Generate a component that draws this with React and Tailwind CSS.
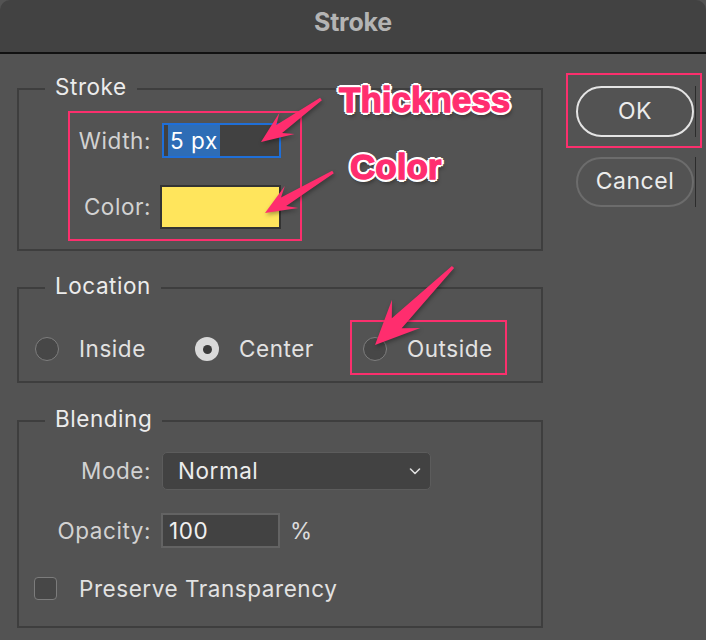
import React from "react";

function arrowPts(tx, ty, px, py, h, w, sw) {
  const dx = px - tx, dy = py - ty;
  const L = Math.hypot(dx, dy);
  const ux = dx / L, uy = dy / L;
  const nx = -uy, ny = ux;
  const bx = px - ux * h, by = py - uy * h;
  const sx = px - ux * h * 0.7, sy = py - uy * h * 0.7;
  const pts = [
    [tx + nx * 1.5, ty + ny * 1.5],
    [sx + nx * sw, sy + ny * sw],
    [bx + nx * w, by + ny * w],
    [px, py],
    [bx - nx * w, by - ny * w],
    [sx - nx * sw, sy - ny * sw],
    [tx - nx * 1.5, ty - ny * 1.5],
  ];
  return pts.map((p) => p[0].toFixed(1) + "," + p[1].toFixed(1)).join(" ");
}

function Radio({ checked }) {
  if (checked) {
    return (
      <div className="w-[24px] h-[24px] rounded-full bg-[#d9d9d9] flex items-center justify-center shrink-0">
        <div className="w-[9px] h-[9px] rounded-full bg-[#3a3a3a]" />
      </div>
    );
  }
  return <div className="w-[24px] h-[24px] rounded-full border-[1.5px] border-[#7e7e7e] bg-[#474747] shrink-0" />;
}

const outline =
  "[-webkit-text-stroke:1.3px_#ff2d6f] [text-shadow:3px_0_0_#fff,-3px_0_0_#fff,0_3px_0_#fff,0_-3px_0_#fff,2px_2px_0_#fff,-2px_-2px_0_#fff,2px_-2px_0_#fff,-2px_2px_0_#fff,2px_4px_4px_rgba(0,0,0,0.45)]";

function Legend({ children }) {
  return (
    <legend className="ml-[26px] px-[10px] leading-[24px] text-[#ececec]">
      <span className="relative -top-[2px]">{children}</span>
    </legend>
  );
}

export default function App() {
  return (
    <div className="relative w-[706px] h-[640px] bg-[#535353] overflow-hidden font-['Inter','Noto_Sans',sans-serif] text-[22.5px] tracking-[0.55px] text-[#e2e2e2]">
      {/* Title bar */}
      <div className="h-[54px] bg-[#424242] rounded-t-[10px] border-b-2 border-[#111] flex items-center justify-center pb-[6px]">
        <span className="font-bold text-[25px] text-[#b4b4b4] tracking-[-0.2px]">Stroke</span>
      </div>

      {/* Body */}
      <div className="flex pt-[23px] pl-[17px]">
        <div className="w-[526px] flex flex-col">
          {/* Stroke group */}
          <fieldset className="border-2 border-[#3e3e3e] pb-[20px]">
            <Legend>Stroke</Legend>
            <div className="flex items-center h-[35px] mt-[22px]">
              <div className="w-[132px] text-right text-[#d2d2d2]">Width:</div>
              <div className="ml-[11px] w-[119px] h-[35px] border-2 border-[#1f6fd8] bg-[#414141] flex items-center pl-[4px]">
                <span className="bg-[#2e6db6] text-white h-[31px] flex items-center px-[2px]">5 px</span>
              </div>
            </div>
            <div className="flex items-center h-[44px] mt-[27px]">
              <div className="w-[132px] text-right text-[#d2d2d2]">Color:</div>
              <div className="ml-[9px] w-[121px] h-[44px] border-2 border-[#333] bg-[#ffe55c]" />
            </div>
          </fieldset>

          {/* Location group */}
          <fieldset className="border-2 border-[#3e3e3e] pb-[20px] mt-[25px]">
            <Legend>Location</Legend>
            <div className="flex items-center h-[24px] mt-[37px] pl-[16px]">
              <div className="w-[160px] flex items-center">
                <Radio />
                <span className="ml-[20px]">Inside</span>
              </div>
              <div className="w-[168px] flex items-center">
                <Radio checked />
                <span className="ml-[20px]">Center</span>
              </div>
              <div className="flex items-center">
                <Radio />
                <span className="ml-[20px]">Outside</span>
              </div>
            </div>
          </fieldset>

          {/* Blending group */}
          <fieldset className="border-2 border-[#3e3e3e] pb-[26px] mt-[26px]">
            <Legend>Blending</Legend>
            <div className="flex items-center h-[38px] mt-[19px]">
              <div className="w-[132px] text-right text-[#d2d2d2]">Mode:</div>
              <div className="ml-[11px] w-[269px] h-[38px] rounded-[5px] border border-[#5c5c5c] bg-[#424242] flex items-center justify-between pl-[15px] pr-[8px]">
                <span className="text-[#ececec]">Normal</span>
                <svg width="14" height="10" viewBox="0 0 14 10" fill="none">
                  <path d="M2.5 3 L7 7.5 L11.5 3" stroke="#dedede" strokeWidth="1.6" strokeLinecap="round" strokeLinejoin="round" />
                </svg>
              </div>
            </div>
            <div className="flex items-center h-[35px] mt-[23px]">
              <div className="w-[132px] text-right text-[#d2d2d2]">Opacity:</div>
              <div className="ml-[10px] w-[119px] h-[35px] border-2 border-[#636363] bg-[#424242] flex items-center pl-[6px]">
                <span className="text-[#f0f0f0]">100</span>
              </div>
              <span className="ml-[10px] text-[#dcdcdc]">%</span>
            </div>
            <div className="flex items-center h-[23px] mt-[29px] pl-[15px]">
              <div className="w-[23px] h-[23px] rounded-[4px] border-[1.5px] border-[#7c7c7c] bg-[#474747]" />
              <span className="ml-[22px]">Preserve Transparency</span>
            </div>
          </fieldset>
        </div>

        {/* Buttons */}
        <div className="ml-[33px] pt-[9px] flex flex-col gap-[20px]">
          <div className="flex items-stretch gap-[1px]">
            <button className="w-[118px] h-[51px] rounded-full border-2 border-[#e4e4e4] text-[23px] text-[#ececec] flex items-center justify-center">OK</button>
            <div className="w-[1px] bg-[#2c2c2c]" />
          </div>
          <div className="flex items-stretch gap-[1px]">
            <button className="w-[118px] h-[50px] rounded-full border-2 border-[#6c6c6c] text-[23px] text-[#ececec] flex items-center justify-center pb-[1px]">Cancel</button>
            <div className="w-[1px] bg-[#2c2c2c]" />
          </div>
        </div>
      </div>

      {/* Annotations */}
      <div className="absolute left-[68px] top-[111px] w-[234px] h-[130px] border-2 border-[#fb2f6d]" />
      <div className="absolute left-[566px] top-[73px] w-[136px] h-[75px] border-2 border-[#fb2f6d]" />
      <div className="absolute left-[350px] top-[320px] w-[157px] h-[55px] border-2 border-[#fb2f6d]" />

      <svg className="absolute left-0 top-0 pointer-events-none [filter:drop-shadow(1px_2px_2px_rgba(0,0,0,0.35))]" width="706" height="640">
        <polygon points={arrowPts(321, 99, 261, 142, 32, 13, 5)} fill="#ff2d6e" />
        <polygon points={arrowPts(333, 172, 265, 213, 31, 13, 5)} fill="#ff2d6e" />
        <polygon points={arrowPts(453, 267, 375, 345, 44, 20, 7)} fill="#ff2d6e" />
      </svg>

      <div className={"absolute left-[339px] top-[80px] font-['Liberation_Sans',sans-serif] font-bold text-[35px] leading-[40px] tracking-[0px] text-[#ff2d6f] " + outline}>
        Thickness
      </div>
      <div className={"absolute left-[350px] top-[147px] font-['Liberation_Sans',sans-serif] font-bold text-[35px] leading-[40px] tracking-[0px] text-[#ff2d6f] " + outline}>
        Color
      </div>
    </div>
  );
}
